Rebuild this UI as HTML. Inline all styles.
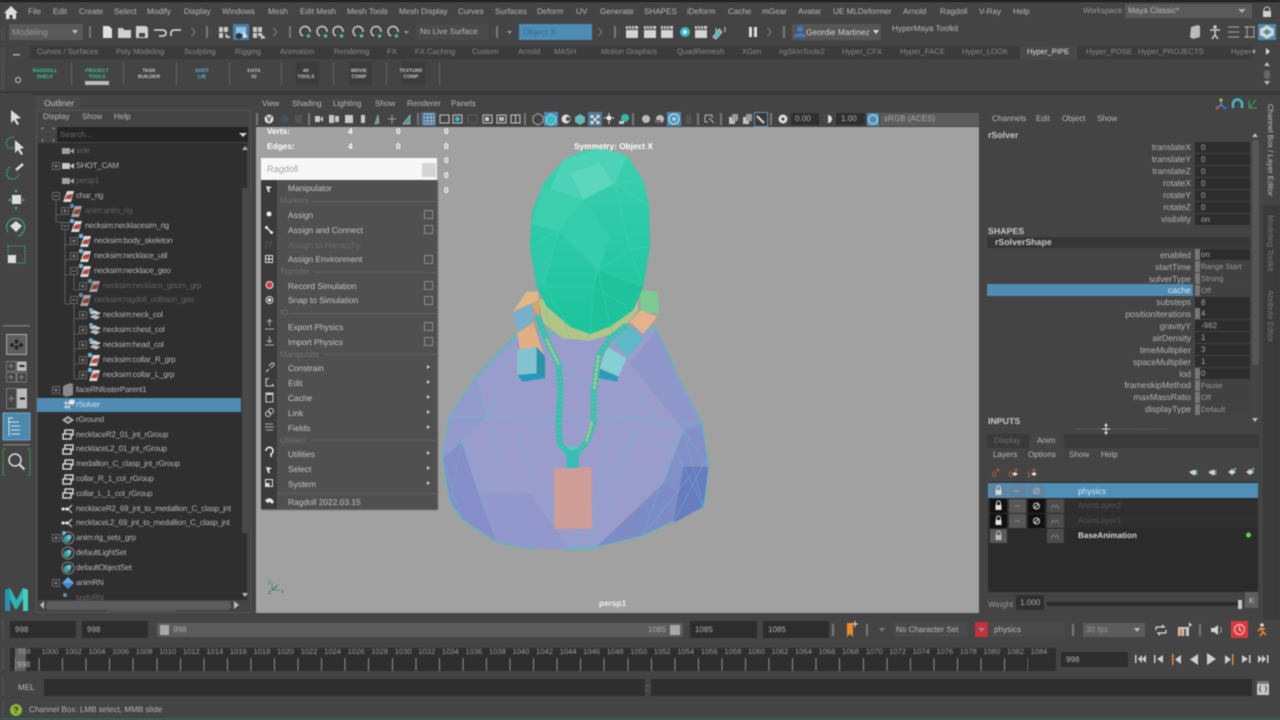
<!DOCTYPE html>
<html><head><meta charset="utf-8"><title>Maya</title>
<style>
html,body{margin:0;padding:0;background:#444;overflow:hidden}
#r{position:relative;width:1280px;height:720px;overflow:hidden;background:#444;font-family:"Liberation Sans",sans-serif;font-size:8.1px;color:#b8b8b8;text-rendering:geometricPrecision;filter:blur(.45px)}
.b{position:absolute}
.t{position:absolute;white-space:nowrap;line-height:12px}
.d{color:#6e6e6e}
.o span{position:absolute;white-space:nowrap;line-height:12px;font-size:8px;letter-spacing:-.22px;color:#b4b4b4}
.o span.d{color:#636363}
.r{position:absolute;right:89px;text-align:right;white-space:nowrap;line-height:12px;font-size:8.7px;color:#b4b4b4}
.v{position:absolute;left:1195px;width:55px;height:11px;background:#2d2d2d;line-height:11px;font-size:8px;color:#a8a8a8;text-indent:6px}
.e{position:absolute;left:1195px;width:55px;height:11px;background:#414141;line-height:11px;font-size:7.6px;color:#999;text-indent:6px}
.e i,.v i{position:absolute;left:0;top:0;width:5px;height:11px;background:#777}
.m{position:absolute;left:288px;white-space:nowrap;line-height:12px;font-size:8.4px;color:#c4c4c4}
.h{position:absolute;left:280px;white-space:nowrap;line-height:12px;font-size:8px;color:#717171}
.k{position:absolute;left:424px;width:7px;height:7px;border:1px solid #8c8c8c}
.a{position:absolute;left:427px;width:0;height:0;border-left:3px solid #d5d5d5;border-top:2.5px solid transparent;border-bottom:2.5px solid transparent}
.l{position:absolute;height:1px;background:#626262;right:843px}
.st{position:absolute;font-size:5px;font-weight:bold;line-height:6px;text-align:center;width:40px;color:#c8c8c8}
.hd{position:absolute;color:#fff;font-weight:bold;font-size:8.3px;line-height:12px;white-space:nowrap}
.w{position:absolute;background:#2d2d2d;height:17px;line-height:17px;font-size:8px;color:#b0b0b0}
#tl{position:absolute;left:18px;top:646px;display:flex;font-size:7.6px;color:#999;line-height:12px}
#tl span{width:23.55px;flex:none}
#sh .t{font-size:7.7px;color:#8a8a8a}
</style></head><body><div id="r">

<!-- chrome backgrounds -->
<div class="b" style="left:0;top:0;width:1280px;height:2px;background:#1b1b1b"></div>
<div class="b" style="left:0;top:91px;width:1280px;height:4px;background:#383838"></div>
<div class="b" style="left:30px;top:46px;width:1222px;height:13px;background:#3b3b3b"></div>
<div class="b" style="left:1020px;top:46px;width:57px;height:14px;background:#484848"></div>

<!-- menu bar -->
<div class="t" style="left:28px;top:6px">File</div><div class="t" style="left:53px;top:6px">Edit</div><div class="t" style="left:79px;top:6px">Create</div><div class="t" style="left:114px;top:6px">Select</div><div class="t" style="left:147px;top:6px">Modify</div><div class="t" style="left:184px;top:6px">Display</div><div class="t" style="left:222px;top:6px">Windows</div><div class="t" style="left:268px;top:6px">Mesh</div><div class="t" style="left:300px;top:6px">Edit Mesh</div><div class="t" style="left:347px;top:6px">Mesh Tools</div><div class="t" style="left:399px;top:6px">Mesh Display</div><div class="t" style="left:458px;top:6px">Curves</div><div class="t" style="left:495px;top:6px">Surfaces</div><div class="t" style="left:537px;top:6px">Deform</div><div class="t" style="left:576px;top:6px">UV</div><div class="t" style="left:600px;top:6px">Generate</div><div class="t" style="left:644px;top:6px">SHAPES</div><div class="t" style="left:687px;top:6px">iDeform</div><div class="t" style="left:728px;top:6px">Cache</div><div class="t" style="left:762px;top:6px">mGear</div><div class="t" style="left:798px;top:6px">Avatar</div><div class="t" style="left:833px;top:6px">UE MLDeformer</div><div class="t" style="left:903px;top:6px">Arnold</div><div class="t" style="left:940px;top:6px">Ragdoll</div><div class="t" style="left:979px;top:6px">V-Ray</div><div class="t" style="left:1013px;top:6px">Help</div>
<div class="b" style="left:1125px;top:4px;width:127px;height:14px;background:#5a5a5a"></div>
<div class="t" style="left:1083px;top:5px;color:#9a9a9a;font-size:7.8px">Workspace:</div>
<div class="t" style="left:1128px;top:5px">Maya Classic*</div>

<!-- toolbar boxes -->
<div class="b" style="left:9px;top:24px;width:74px;height:16px;background:#5a5a5a"></div>
<div class="t" style="left:12px;top:26px;font-size:8.8px;color:#999">Modeling</div>
<div class="b" style="left:233px;top:24px;width:16px;height:16px;background:#4a7fa6"></div>
<div class="b" style="left:416px;top:24px;width:72px;height:16px;background:#4a4a4a"></div>
<div class="t" style="left:420px;top:26px">No Live Surface</div>
<div class="b" style="left:519px;top:24px;width:73px;height:16px;background:#4d8db5"></div>
<div class="t" style="left:523px;top:26px;color:#3f6a88;font-size:8.6px">Object X</div>
<div class="b" style="left:792px;top:24px;width:89px;height:16px;background:#565656"></div>
<div class="t" style="left:806px;top:26px;color:#d0d0d0;font-size:8.3px">Geordie Martinez</div>
<div class="t" style="left:892px;top:23px">HyperMaya Toolkit</div>
<div class="b" style="left:1258px;top:24px;width:18px;height:16px;background:#4d8db5"></div>

<!-- shelf tabs -->
<div id="sh">
<div class="t" style="left:37px;top:46px">Curves / Surfaces</div><div class="t" style="left:116px;top:46px">Poly Modeling</div><div class="t" style="left:184px;top:46px">Sculpting</div><div class="t" style="left:235px;top:46px">Rigging</div><div class="t" style="left:280px;top:46px">Animation</div><div class="t" style="left:334px;top:46px">Rendering</div><div class="t" style="left:387px;top:46px">FX</div><div class="t" style="left:415px;top:46px">FX Caching</div><div class="t" style="left:472px;top:46px">Custom</div><div class="t" style="left:518px;top:46px">Arnold</div><div class="t" style="left:554px;top:46px">MASH</div><div class="t" style="left:601px;top:46px">Motion Graphics</div><div class="t" style="left:677px;top:46px">QuadRemesh</div><div class="t" style="left:742px;top:46px">XGen</div><div class="t" style="left:779px;top:46px">ngSkinTools2</div><div class="t" style="left:842px;top:46px">Hyper_CFX</div><div class="t" style="left:900px;top:46px">Hyper_FACE</div><div class="t" style="left:962px;top:46px">Hyper_LOOK</div><div class="t" style="left:1027px;top:46px;color:#e0e0e0">Hyper_PIPE</div><div class="t" style="left:1086px;top:46px">Hyper_POSE</div><div class="t" style="left:1138px;top:46px">Hyper_PROJECTS</div><div class="t" style="left:1231px;top:46px">Hyper</div>
</div>

<!-- shelf content -->
<div class="st" style="left:25px;top:68px;color:#34c8a0">RAGDOLL<br>SHELF</div>
<div class="st" style="left:77px;top:68px;color:#34c8a0">PROJECT<br>TOOLS</div>
<div class="b" style="left:85px;top:81px;width:24px;height:4px;background:#bcbcbc"></div>
<div class="st" style="left:129px;top:68px">TASK<br>BUILDER</div>
<div class="st" style="left:182px;top:68px;color:#55b8d0">SHOT<br>LIB</div>
<div class="st" style="left:234px;top:68px">DATA<br>IO</div>
<div class="b" style="left:296px;top:62px;width:23px;height:23px;background:#3c3c3c"></div>
<div class="st" style="left:286px;top:68px">4K<br>TOOLS</div>
<div class="b" style="left:349px;top:62px;width:23px;height:23px;background:#3c3c3c"></div>
<div class="st" style="left:339px;top:68px">MOVIE<br>COMP</div>
<div class="b" style="left:402px;top:62px;width:23px;height:23px;background:#3c3c3c"></div>
<div class="st" style="left:391px;top:68px">TEXTURE<br>COMP</div>
<div class="b" style="left:71px;top:62px;width:1px;height:23px;background:#626262;box-shadow:52px 0 #626262,105px 0 #626262,158px 0 #626262,210px 0 #626262,262px 0 #626262,315px 0 #626262,368px 0 #626262"></div>

<!-- outliner -->
<div class="b" style="left:36px;top:96px;width:44px;height:15px;background:#4a4a4a"></div>
<div class="t" style="left:44px;top:97px;font-size:8.6px;color:#c0c0c0">Outliner</div>
<div class="b" style="left:36px;top:110px;width:213px;height:501px;border:1px solid #555;background:#444"></div>
<div class="t" style="left:43px;top:111px">Display</div><div class="t" style="left:82px;top:111px">Show</div><div class="t" style="left:114px;top:111px">Help</div>
<div class="b" style="left:38px;top:143px;width:209px;height:457px;background:#2f2f2f"></div>
<div class="b" style="left:57px;top:127px;width:191px;height:15px;background:#252525"></div>
<div class="t" style="left:60px;top:129px;color:#6a6a6a">Search...</div>
<div class="b" style="left:37px;top:398px;width:204px;height:14px;background:#4f8bb3"></div>
<div class="b" style="left:242px;top:188px;width:7px;height:345px;background:#494949"></div>

<div class="o">
<span class="d" style="left:76px;top:145px">side</span>
<span style="left:76px;top:160px">SHOT_CAM</span>
<span class="d" style="left:76px;top:175px">persp1</span>
<span style="left:76px;top:190px">char_rig</span>
<span class="d" style="left:85px;top:205px">anim:anim_rig</span>
<span style="left:85px;top:220px">necksim:necklacesim_rig</span>
<span style="left:94px;top:235px">necksim:body_skeleton</span>
<span style="left:94px;top:250px">necksim:necklace_util</span>
<span style="left:94px;top:265px">necksim:necklace_geo</span>
<span class="d" style="left:103px;top:280px">necksim:necklace_geom_grp</span>
<span class="d" style="left:94px;top:294px">necksim:ragdoll_collision_geo</span>
<span style="left:103px;top:309px">necksim:neck_col</span>
<span style="left:103px;top:324px">necksim:chest_col</span>
<span style="left:103px;top:339px">necksim:head_col</span>
<span style="left:103px;top:354px">necksim:collar_R_grp</span>
<span style="left:103px;top:369px">necksim:collar_L_grp</span>
<span style="left:76px;top:384px">faceRNfosterParent1</span>
<span style="left:76px;top:399px;color:#d0e0ea">rSolver</span>
<span style="left:76px;top:414px">rGround</span>
<span style="left:76px;top:429px">necklaceR2_01_jnt_rGroup</span>
<span style="left:76px;top:443px">necklaceL2_01_jnt_rGroup</span>
<span style="left:76px;top:458px">medallion_C_clasp_jnt_rGroup</span>
<span style="left:76px;top:473px">collar_R_1_col_rGroup</span>
<span style="left:76px;top:488px">collar_L_1_col_rGroup</span>
<span style="left:76px;top:503px">necklaceR2_69_jnt_to_medallion_C_clasp_jnt</span>
<span style="left:76px;top:517px">necklaceL2_69_jnt_to_medallion_C_clasp_jnt</span>
<span style="left:76px;top:532px">anim:rig_sets_grp</span>
<span style="left:76px;top:547px">defaultLightSet</span>
<span style="left:76px;top:562px">defaultObjectSet</span>
<span style="left:76px;top:577px">animRN</span>
<span class="d" style="left:76px;top:592px;height:8px;overflow:hidden">bodyRN</span>
</div>
<div class="b" style="left:38px;top:600px;width:209px;height:11px;background:#444"></div>
<div class="b" style="left:46px;top:601px;width:185px;height:9px;background:#5c5c5c;border-radius:4px"></div>

<!-- viewport panel -->
<div class="t" style="left:262px;top:98px">View</div><div class="t" style="left:292px;top:98px">Shading</div><div class="t" style="left:333px;top:98px">Lighting</div><div class="t" style="left:375px;top:98px">Show</div><div class="t" style="left:407px;top:98px">Renderer</div><div class="t" style="left:451px;top:98px">Panels</div>
<div class="b" style="left:256px;top:127px;width:723px;height:486px;background:#a1a1a1"></div>
<div class="b" style="left:421px;top:112px;width:15px;height:14px;background:#4a6f8c"></div>
<div class="b" style="left:544px;top:112px;width:14px;height:14px;background:#4d8db5"></div>
<div class="b" style="left:588px;top:112px;width:14px;height:14px;background:#557a99"></div>
<div class="b" style="left:667px;top:112px;width:14px;height:14px;background:#4d8db5"></div>
<div class="b" style="left:754px;top:112px;width:12px;height:13px;border:1px solid #5c8fb0;background:#3a3a3a"></div>
<div class="b" style="left:791px;top:113px;width:28px;height:12px;background:#2f2f2f"></div>
<div class="t" style="left:795px;top:113px;color:#b0b0b0">0.00</div>
<div class="b" style="left:836px;top:113px;width:29px;height:12px;background:#2f2f2f"></div>
<div class="t" style="left:841px;top:113px;color:#b0b0b0">1.00</div>
<div class="b" style="left:867px;top:113px;width:12px;height:13px;background:#4d8db5"></div>
<div class="b" style="left:880px;top:113px;width:99px;height:13px;background:#5c5c5c"></div>
<div class="t" style="left:884px;top:113px;color:#aaa">sRGB (ACES)</div>

<!-- 3D model -->
<svg class="b" style="left:430px;top:130px" width="300" height="430" viewBox="0 0 900 1290">
<defs>
<linearGradient id="hg" x1="0" y1="0" x2="0" y2="1"><stop offset="0" stop-color="#3fd0b0"/><stop offset=".35" stop-color="#30cbaa"/><stop offset="1" stop-color="#1cc49c"/></linearGradient>
</defs>
<!-- body -->
<path d="M260 615 L140 740 L60 860 L38 985 L60 1110 L95 1165 L200 1235 L300 1255 L360 1250 L420 1258 L500 1250 L640 1215 L820 1130 L835 1010 L815 880 L745 745 L680 600 L520 600 Z" fill="#9a9dcb" stroke="#45c3c8" stroke-width="5" stroke-linejoin="round"/>
<g>
<polygon points="140,740 60,860 38,985 95,935 170,860" fill="#929bcc"/>
<polygon points="38,985 60,1110 95,1165 200,1235 145,1090 95,935" fill="#868ec9"/>
<polygon points="200,1235 300,1255 420,1258 300,1090 145,1090" fill="#9297cc"/>
<polygon points="680,600 745,745 815,880 760,900 680,800 600,700" fill="#9097ca"/>
<polygon points="760,900 815,880 835,1010 820,1130 700,1060" fill="#8390c8"/>
<polygon points="700,1060 820,1130 640,1215 500,1250" fill="#7e8cc6"/>
<polygon points="760,1010 835,1010 820,1130 730,1180" fill="#6a7cc0"/>
</g>
<g stroke="#5ac5cd" stroke-width="1.7" fill="none" opacity=".7">
<path d="M170 860 L60 860 M170 860 L660 870 M660 870 L815 880 M95 935 L170 860 L300 1250 M95 935 L260 1200 M95 935 L38 985 M95 935 L200 1235 M170 860 L340 630 M170 860 L140 740 M260 615 L170 860 M340 630 L540 860 L660 870 M660 870 L745 745 M660 870 L600 700 M760 900 L815 880 M760 900 L660 870 M760 900 L700 1060 M760 900 L835 1010 M760 900 L820 1130 M610 915 L500 1250 M610 915 L660 870 M610 915 L730 950 M730 950 L640 1215 M730 950 L820 1130 M730 950 L760 900 M610 915 L420 1258 M265 915 L265 930 L360 870 M265 930 L420 1258 M540 860 L480 1250 M60 1110 L95 935 M38 985 L95 1165 M820 1000 L730 1180 M785 1030 L640 1215"/>
</g>
<!-- neck -->
<path d="M325 510 L340 580 L400 625 L480 632 L570 605 L625 540 L620 490 L480 480 Z" fill="#b3c487"/>
<g stroke="#63c9a8" stroke-width="1.5" fill="none"><path d="M345 540 L370 620 M400 560 L420 628 M470 600 L480 632 M540 590 L550 612"/></g>
<!-- collars left -->
<polygon points="248,545 290,485 325,485 325,510 305,520" fill="#e0b78b"/>
<polygon points="305,520 325,510 330,560 318,548" fill="#d9a269"/>
<polygon points="248,550 305,520 310,575 262,605" fill="#78b0cc"/>
<polygon points="262,610 310,578 340,670 270,660" fill="#e3ae84"/>
<polygon points="262,660 320,650 320,730 262,735" fill="#83c3cf"/>
<polygon points="320,650 345,680 345,745 320,730" fill="#2e91a8"/>
<polygon points="262,735 320,730 345,745 278,755" fill="#2798bb"/>
<!-- collars right -->
<polygon points="630,480 682,485 688,550 632,545" fill="#7dca93"/>
<polygon points="598,575 632,540 682,560 640,612" fill="#e3b48c"/>
<polygon points="550,640 595,590 640,625 595,680" fill="#5fb8c7"/>
<polygon points="510,715 530,650 590,685 565,740" fill="#86cfd3"/>
<polygon points="507,715 565,740 562,755 505,745" fill="#2b9cb8"/>
<!-- beads -->
<g fill="none" stroke-linecap="round" stroke-linejoin="round">
<path d="M325 565 L350 630 L385 700 L392 780 L385 880 L390 940 L410 965" stroke="#45c0b2" stroke-width="19"/>
<path d="M325 565 L350 630 L385 700 L392 780 L385 880 L390 940 L410 965" stroke="#2ba6a8" stroke-width="19" stroke-dasharray="2 12" stroke-linecap="butt" opacity=".6"/>
<path d="M585 590 L540 625 L505 680 L492 780 L490 880 L470 935 L445 965" stroke="#4bc0b0" stroke-width="19"/>
<path d="M585 590 L540 625 L505 680 L492 780 L490 880 L470 935 L445 965" stroke="#2ba6a8" stroke-width="19" stroke-dasharray="2 12" stroke-linecap="butt" opacity=".6"/>
<path d="M350 630 L385 700 M505 680 L492 780 M485 880 L470 930" stroke="#a8c48e" stroke-width="9" stroke-dasharray="3 10"/>
</g>
<rect x="410" y="952" width="36" height="62" fill="#36bdb5"/>
<ellipse cx="428" cy="955" rx="17" ry="5" fill="#55cfc4"/>
<polygon points="372,1016 485,1012 486,1195 372,1197" fill="#cf9d97"/>
<!-- head -->
<path d="M510 55 L590 75 L640 150 L658 230 L660 350 L640 470 L610 540 L540 590 L480 612 L420 590 L350 530 L320 470 L300 350 L305 250 L340 160 L400 90 L460 62 Z" fill="url(#hg)"/>
<polygon points="400,90 510,55 590,75 555,160 460,208 360,175" fill="#4cd2b6"/>
<polygon points="420,130 510,100 550,160 460,208" fill="#5cd7bd"/>
<polygon points="360,175 460,208 385,300 305,280 340,160" fill="#3bcfae"/>
<polygon points="505,420 640,470 610,540 540,590 480,612 490,470" fill="#1fc39b"/>
<polygon points="300,350 385,300 340,470 320,470" fill="#2ec9a8"/>
<polygon points="505,420 385,300 460,208 540,320" fill="#35cdad"/>
<g stroke="#5fdcc4" stroke-width="1.3" fill="none" opacity=".55">
<path d="M510 55 L460 208 L360 175 M510 55 L555 160 L460 208 M590 75 L555 160 L640 150 M555 160 L658 230 M460 208 L385 300 L305 280 M385 300 L300 350 M385 300 L505 420 L640 470 M505 420 L490 470 L480 612 M505 420 L540 590 M385 300 L340 470 L420 590 M340 470 L490 470 M490 470 L610 540 M555 160 L600 360 L505 420 M600 360 L660 350 M600 360 L640 470"/>
</g>
</svg>

<!-- HUD -->
<div class="hd" style="left:267px;top:125px">Verts:</div><div class="hd" style="left:267px;top:140px">Edges:</div>
<div class="hd" style="left:348px;top:125px">4</div><div class="hd" style="left:396px;top:125px">0</div><div class="hd" style="left:444px;top:125px">0</div>
<div class="hd" style="left:348px;top:140px">4</div><div class="hd" style="left:396px;top:140px">0</div><div class="hd" style="left:444px;top:140px">0</div>
<div class="hd" style="left:444px;top:154px">0</div><div class="hd" style="left:444px;top:169px">0</div><div class="hd" style="left:444px;top:184px">0</div>
<div class="hd" style="left:574px;top:140px">Symmetry: Object X</div>
<div class="hd" style="left:599px;top:597px;color:#eee">persp1</div>

<!-- popup menu -->
<div class="b" style="left:261px;top:158px;width:176px;height:22px;background:#f7f7f7"></div>
<div class="t" style="left:267px;top:163px;font-size:9.2px;color:#a4a4a4">Ragdoll</div>
<div class="b" style="left:422px;top:163px;width:14px;height:14px;background:#d4d4d4"></div>
<div class="b" style="left:261px;top:180px;width:176px;height:329px;background:#505050;box-shadow:1px 1px 1px #555"></div>
<div class="b" style="left:261px;top:180px;width:16px;height:329px;background:#3b3b3b"></div>
<div class="m" style="top:182px">Manipulator</div>
<div class="h" style="top:195px">Markers</div><div class="l" style="top:201px;left:312px"></div>
<div class="m" style="top:209px">Assign</div><div class="k" style="top:210px"></div>
<div class="m" style="top:224px">Assign and Connect</div><div class="k" style="top:225px"></div>
<div class="m" style="top:239px;color:#6b6b6b">Assign to Hierarchy</div>
<div class="m" style="top:253px">Assign Environment</div><div class="k" style="top:255px"></div>
<div class="h" style="top:266px">Transfer</div><div class="l" style="top:272px;left:314px"></div>
<div class="m" style="top:280px">Record Simulation</div><div class="k" style="top:281px"></div>
<div class="m" style="top:294px">Snap to Simulation</div><div class="k" style="top:296px"></div>
<div class="h" style="top:307px">IO</div><div class="l" style="top:313px;left:290px"></div>
<div class="m" style="top:321px">Export Physics</div><div class="k" style="top:322px"></div>
<div class="m" style="top:336px">Import Physics</div><div class="k" style="top:337px"></div>
<div class="h" style="top:349px">Manipulate</div><div class="l" style="top:354px;left:324px"></div>
<div class="m" style="top:362px">Constrain</div><div class="a" style="top:365px"></div>
<div class="m" style="top:377px">Edit</div><div class="a" style="top:380px"></div>
<div class="m" style="top:392px">Cache</div><div class="a" style="top:395px"></div>
<div class="m" style="top:407px">Link</div><div class="a" style="top:410px"></div>
<div class="m" style="top:422px">Fields</div><div class="a" style="top:425px"></div>
<div class="h" style="top:435px">Utilities</div><div class="l" style="top:440px;left:310px"></div>
<div class="m" style="top:448px">Utilities</div><div class="a" style="top:451px"></div>
<div class="m" style="top:463px">Select</div><div class="a" style="top:466px"></div>
<div class="m" style="top:478px">System</div><div class="a" style="top:481px"></div>
<div class="l" style="top:493px;left:277px;height:1px"></div>
<div class="m" style="top:496px">Ragdoll 2022.03.15</div>

<!-- channel box -->
<div class="t" style="left:992px;top:113px">Channels</div><div class="t" style="left:1036px;top:113px">Edit</div><div class="t" style="left:1062px;top:113px">Object</div><div class="t" style="left:1097px;top:113px">Show</div>
<div class="t" style="left:988px;top:129px;font-weight:bold;font-size:8.8px;color:#c8c8c8">rSolver</div>
<div class="r" style="top:141px">translateX</div><div class="v" style="top:142px">0</div>
<div class="r" style="top:153px">translateY</div><div class="v" style="top:154px">0</div>
<div class="r" style="top:165px">translateZ</div><div class="v" style="top:166px">0</div>
<div class="r" style="top:177px">rotateX</div><div class="v" style="top:178px">0</div>
<div class="r" style="top:189px">rotateY</div><div class="v" style="top:190px">0</div>
<div class="r" style="top:201px">rotateZ</div><div class="v" style="top:202px">0</div>
<div class="r" style="top:213px">visibility</div><div class="v" style="top:214px">on</div>
<div class="t" style="left:988px;top:225px;font-weight:bold;font-size:8.8px;color:#c8c8c8">SHAPES</div>
<div class="b" style="left:987px;top:237px;width:263px;height:11px;background:#363636"></div>
<div class="t" style="left:995px;top:236px;font-weight:bold;font-size:8.8px;color:#c8c8c8">rSolverShape</div>
<div class="b" style="left:987px;top:284px;width:206px;height:12px;background:#4f8bb3"></div>
<div class="r" style="top:249px">enabled</div><div class="v" style="top:249px"><i></i>on</div>
<div class="r" style="top:261px">startTime</div><div class="e" style="top:261px"><i></i>Range Start</div>
<div class="r" style="top:273px">solverType</div><div class="e" style="top:273px"><i></i>Strong</div>
<div class="r" style="top:284px;color:#dbe7ef">cache</div><div class="e" style="top:285px"><i></i>Off</div>
<div class="r" style="top:296px">substeps</div><div class="v" style="top:297px">8</div>
<div class="r" style="top:308px">positionIterations</div><div class="v" style="top:308px"><i></i>4</div>
<div class="r" style="top:320px">gravityY</div><div class="v" style="top:320px">-982</div>
<div class="r" style="top:332px">airDensity</div><div class="v" style="top:332px">1</div>
<div class="r" style="top:344px">timeMultiplier</div><div class="v" style="top:344px">3</div>
<div class="r" style="top:356px">spaceMultiplier</div><div class="v" style="top:356px">1</div>
<div class="r" style="top:368px">lod</div><div class="v" style="top:368px"><i></i>0</div>
<div class="r" style="top:379px">frameskipMethod</div><div class="e" style="top:380px"><i></i>Pause</div>
<div class="r" style="top:391px">maxMassRatio</div><div class="e" style="top:392px"><i></i>Off</div>
<div class="r" style="top:403px">displayType</div><div class="e" style="top:404px"><i></i>Default</div>
<div class="t" style="left:988px;top:415px;font-weight:bold;font-size:8.8px;color:#c8c8c8">INPUTS</div>
<div class="b" style="left:1252px;top:140px;width:7px;height:225px;background:#565656;border-radius:3px"></div>

<!-- side tabs -->
<div class="b" style="left:1263px;top:205px;width:17px;height:415px;background:#3a3a3a"></div>
<div class="b" style="left:1262px;top:95px;width:14px;height:110px;background:#444"></div>
<div class="t" style="left:1264px;top:104px;writing-mode:vertical-rl;color:#c0c0c0;font-size:7.7px">Channel Box / Layer Editor</div>
<div class="t" style="left:1264px;top:215px;writing-mode:vertical-rl;color:#777;font-size:7.9px">Modeling Toolkit</div>
<div class="t" style="left:1264px;top:290px;writing-mode:vertical-rl;color:#777;font-size:7.9px">Attribute Editor</div>

<!-- layer editor -->
<div class="b" style="left:987px;top:434px;width:272px;height:14px;background:#3a3a3a"></div>
<div class="b" style="left:1029px;top:434px;width:35px;height:14px;background:#454545"></div>
<div class="t" style="left:994px;top:435px;color:#6f6f6f">Display</div><div class="t" style="left:1037px;top:435px">Anim</div>
<div class="t" style="left:993px;top:449px">Layers</div><div class="t" style="left:1028px;top:449px">Options</div><div class="t" style="left:1069px;top:449px">Show</div><div class="t" style="left:1101px;top:449px">Help</div>
<div class="b" style="left:988px;top:482px;width:270px;height:110px;background:#2b2b2b"></div>
<div class="b" style="left:988px;top:483px;width:270px;height:15px;background:#4f8fb8"></div>
<div class="b" style="left:988px;top:499px;width:270px;height:14px;background:#2f2f2f"></div>
<div class="b" style="left:988px;top:514px;width:270px;height:14px;background:#2f2f2f"></div>
<div class="t" style="left:1078px;top:485px;color:#d6e6f0;font-size:8.4px">physics</div>
<div class="t" style="left:1078px;top:500px;color:#555">AnimLayer2</div>
<div class="t" style="left:1078px;top:515px;color:#555">AnimLayer1</div>
<div class="t" style="left:1078px;top:530px;font-weight:bold;color:#d4d4d4">BaseAnimation</div>
<div class="t" style="left:988px;top:599px;color:#9a9a9a">Weight</div>
<div class="b" style="left:1016px;top:595px;width:28px;height:15px;background:#2f2f2f"></div>
<div class="t" style="left:1020px;top:597px;color:#aaa">1.000</div>
<div class="b" style="left:1047px;top:602px;width:193px;height:4px;background:#2a2a2a"></div>
<div class="b" style="left:1238px;top:600px;width:4px;height:9px;background:#c8c8c8"></div>
<div class="b" style="left:1245px;top:592px;width:13px;height:16px;background:#606060"></div>
<div class="t" style="left:1249px;top:595px;color:#ccc;font-size:7.5px">K</div>

<!-- range row -->
<div class="w" style="left:10px;top:621px;width:66px;text-indent:5px">998</div>
<div class="w" style="left:82px;top:621px;width:66px;text-indent:5px">998</div>
<div class="b" style="left:157px;top:623px;width:526px;height:14px;background:#5c5c5c"></div>
<div class="b" style="left:160px;top:625px;width:9px;height:10px;background:#a8a8a8"></div>
<div class="b" style="left:670px;top:625px;width:10px;height:10px;background:#a8a8a8"></div>
<div class="t" style="left:173px;top:624px;color:#aaa">998</div>
<div class="t" style="left:648px;top:624px;color:#aaa">1085</div>
<div class="w" style="left:690px;top:621px;width:67px;text-indent:5px">1085</div>
<div class="w" style="left:763px;top:621px;width:66px;text-indent:5px">1085</div>
<div class="b" style="left:894px;top:622px;width:74px;height:15px;background:#4a4a4a"></div>
<div class="t" style="left:896px;top:624px">No Character Set</div>
<div class="b" style="left:975px;top:622px;width:13px;height:15px;background:#c5303d"></div>
<div class="b" style="left:989px;top:622px;width:76px;height:15px;background:#4a4a4a"></div>
<div class="t" style="left:994px;top:624px">physics</div>
<div class="b" style="left:1083px;top:623px;width:62px;height:14px;background:#5c5c5c"></div>
<div class="t" style="left:1086px;top:624px;color:#999">30 fps</div>
<div class="b" style="left:1231px;top:621px;width:17px;height:17px;background:#d8393f"></div>

<!-- timeline -->
<div class="b" style="left:10px;top:648px;width:1046px;height:23px;background:#2e2e2e"></div>
<div class="b" style="left:15px;top:648px;width:11px;height:23px;background:#626262"></div>
<div class="b" style="left:14.7px;top:658px;width:1013px;height:13px;background:repeating-linear-gradient(90deg,#8c8c8c 0,#8c8c8c 1px,transparent 1px,transparent 23.55px)"></div>
<div id="tl"><span>998</span><span>1000</span><span>1002</span><span>1004</span><span>1006</span><span>1008</span><span>1010</span><span>1012</span><span>1014</span><span>1016</span><span>1018</span><span>1020</span><span>1022</span><span>1024</span><span>1026</span><span>1028</span><span>1030</span><span>1032</span><span>1034</span><span>1036</span><span>1038</span><span>1040</span><span>1042</span><span>1044</span><span>1046</span><span>1048</span><span>1050</span><span>1052</span><span>1054</span><span>1056</span><span>1058</span><span>1060</span><span>1062</span><span>1064</span><span>1066</span><span>1068</span><span>1070</span><span>1072</span><span>1074</span><span>1076</span><span>1078</span><span>1080</span><span>1082</span><span>1084</span></div>
<div class="t" style="left:17px;top:659px;color:#bbb;font-size:8px">998</div>
<div class="b" style="left:1061px;top:652px;width:67px;height:15px;background:#2e2e2e"></div>
<div class="t" style="left:1066px;top:654px;color:#b0b0b0">998</div>

<!-- MEL -->
<div class="t" style="left:18px;top:682px;color:#b8b8b8">MEL</div>
<div class="b" style="left:44px;top:679px;width:601px;height:17px;background:#2e2e2e"></div>
<div class="b" style="left:651px;top:679px;width:601px;height:17px;background:#2e2e2e"></div>
<!-- help -->
<div class="b" style="left:10px;top:704px;width:12px;height:12px;border-radius:6px;background:#8fb53c;text-align:center;line-height:12px;font-size:9px;font-weight:bold;color:#2c3a10">?</div>
<div class="t" style="left:29px;top:704px;color:#b4b4b4">Channel Box: LMB select, MMB slide</div>
<div class="b" style="left:0;top:718px;width:1280px;height:2px;background:#3d5b58"></div>

<!-- Icon overlay -->
<svg class="b" style="left:0;top:0" width="1280" height="720" viewBox="0 0 1280 720">
<defs>
<g id="xf"><polygon points="-5,6 -1,-5 6,-5 3,6" fill="#d8d8d8"/><polygon points="-3,3 -1,-1 5,-2 3,3" fill="#b0463f"/></g>
<g id="xfc"><use href="#xf"/><circle cx="-4" cy="-5" r="2.300" fill="#6fb4dc"/></g>
<g id="cam"><rect x="-6" y="-3" width="8" height="6" fill="#c8c8c8"/><polygon points="2,0 6,-3 6,3" fill="#c8c8c8"/></g>
<g id="msh"><polygon points="-6,-2 -1,-5 6,-2 1,1" fill="#c8c8c8"/><polygon points="-6,2 -1,-1 6,2 1,5" fill="#b8b8b8" stroke="#2f2f2f" stroke-width=".6"/><circle cx="-4" cy="-5" r="2" fill="#6fb4dc"/></g>
<g id="grp"><rect x="-3" y="-5" width="8" height="5" fill="none" stroke="#ddd" stroke-width="1.400"/><rect x="-5" y="-1" width="8" height="5" fill="#2f2f2f" stroke="#ddd" stroke-width="1.400"/></g>
<g id="con"><path d="M-5 0 L0 0 L4 -4 M0 0 L4 4" stroke="#ccc" stroke-width="1.200" fill="none"/><circle cx="-5" cy="0" r="1.600" fill="#ddd"/><circle cx="-1" cy="0" r="1.600" fill="#ddd"/></g>
<g id="set"><circle r="6" fill="none" stroke="#888" stroke-width="1"/><circle cx="-1" cy="1" r="3.600" fill="#3a9c9c"/><circle cx="1" cy="-1" r="2.400" fill="#6fc0c8"/></g>
<g id="ep"><rect x="-3.500" y="-3.500" width="7" height="7" fill="none" stroke="#777" stroke-width=".8"/><path d="M-2 0H2M0 -2V2" stroke="#999" stroke-width=".8"/></g>
<g id="em"><rect x="-3.500" y="-3.500" width="7" height="7" fill="none" stroke="#777" stroke-width=".8"/><path d="M-2 0H2" stroke="#999" stroke-width=".8"/></g>
<g id="sep"><rect x="-1" y="-6" width="2" height="12" fill="#7a7a7a"/></g>
<g id="chev"><path d="M-1.500 -4L2 0L-1.500 4" fill="none" stroke="#7c7c7c" stroke-width="1"/></g>
<g id="mag"><path d="M-2 4 A5 5 0 1 1 5 0" fill="none" stroke="#c4c4c4" stroke-width="1.600"/><circle cx="3.500" cy="4" r="1.800" fill="#3fc3a5"/></g>
<g id="clap"><rect x="-6" y="-2" width="12" height="8" fill="#d4d4d4"/><rect x="-6" y="-6" width="12" height="3" fill="#ccc"/><path d="M-4 -6l1 3M-1 -6l1 3M2 -6l1 3" stroke="#444" stroke-width="1"/></g>
<g id="lk"><rect x="-3" y="-1" width="6" height="5" fill="currentColor"/><path d="M-2 -1V-3A2 2 0 0 1 2 -3V-1" fill="none" stroke="currentColor" stroke-width="1"/></g>
<g id="na"><circle r="3" fill="none" stroke="currentColor" stroke-width="1"/><path d="M-2 2L2 -2" stroke="currentColor" stroke-width="1"/></g>
</defs>

<!-- home -->
<path d="M4 13 L11 6 L18 13 H16 V19 H12.500 V15 H9.500 V19 H6 V13Z" fill="#ddd"/>
<path d="M1.500 28V40M1.500 48V90M4 48V90M4 27V41M3 620V640M3 648V670M3 678V696M3 702V716" stroke="#6e6e6e" stroke-width="1" stroke-dasharray="1 1.500" fill="none"/>
<path d="M0 94H32" stroke="#666" stroke-dasharray="1 1"/>
<!-- toolbar -->
<polygon points="72,30 78,30 75,34" fill="#bcbcbc"/>
<use href="#sep" x="90" y="32"/><use href="#sep" x="207" y="32"/><use href="#sep" x="290" y="32"/><use href="#sep" x="497" y="32"/><use href="#sep" x="615" y="32"/><use href="#sep" x="784" y="32"/>
<use href="#chev" x="193" y="32"/><use href="#chev" x="275" y="32"/><use href="#chev" x="600" y="32"/><use href="#chev" x="769" y="32"/>
<path d="M103 26h6l3 3v9h-9z" fill="#e0e0e0"/>
<path d="M118 28h5l1 2h7v8h-13z" fill="#cfcfcf"/>
<path d="M136 26h10l2 2v10h-12zM139 33h6v4h-6z" fill="#d0d0d0" fill-rule="evenodd"/>
<path d="M154 30h9a3 3 0 0 1 0 6h-4" fill="none" stroke="#ddd" stroke-width="1.600"/><path d="M171 36v-3a3 3 0 0 1 3-3h7" fill="none" stroke="#ddd" stroke-width="1.600"/>
<g fill="#c8c8c8"><rect x="219" y="27" width="4" height="5"/><rect x="224" y="27" width="4" height="5"/><rect x="219" y="33" width="4" height="5"/><polygon points="225,33 231,38 226,38"/></g>
<g fill="#e2e2e2"><rect x="236" y="27" width="10" height="7" fill="#8bc1df"/><circle cx="239" cy="36" r="3" fill="#333"/><polygon points="243,31 248,37 243,38"/></g>
<g fill="#c8c8c8"><rect x="253" y="27" width="4" height="5"/><rect x="258" y="27" width="4" height="5"/><rect x="253" y="33" width="4" height="5"/><rect x="258" y="33" width="4" height="3"/><polygon points="260,33 266,38 261,39"/></g>
<use href="#mag" x="305" y="32"/><use href="#mag" x="322" y="32"/><use href="#mag" x="338" y="32"/><use href="#mag" x="358" y="32"/><use href="#mag" x="376" y="32"/><use href="#mag" x="393" y="32"/>
<polygon points="404,31 409,31 406.500,34" fill="#999"/><polygon points="507,31 512,31 509.500,34" fill="#999"/>
<use href="#clap" x="632" y="32"/><use href="#clap" x="650" y="32"/><use href="#clap" x="667" y="32"/>
<circle cx="685" cy="32" r="5" fill="#3fb6c8"/><circle cx="685" cy="32" r="2" fill="#d6eef4"/>
<use href="#clap" x="701" y="32"/>
<path d="M713 37l6-8 3 3-6 7zM725 27v5M716 28v4" stroke="#ccc" stroke-width="1" fill="#3fb6c8"/>
<rect x="749" y="27" width="3" height="10" fill="#ddd"/><rect x="754" y="27" width="3" height="10" fill="#ddd"/>
<circle cx="800" cy="29" r="3" fill="#3e7fc8"/><path d="M794 37c0-5 12-5 12 0z" fill="#3e7fc8"/>
<polygon points="873,30 879,30 876,34" fill="#ddd"/>
<polygon points="1238,9 1246,9 1242,13" fill="#aaa"/>
<path d="M1264 10a3 3 0 0 1 6 0v2h-6z" fill="none" stroke="#ccc"/><rect x="1263" y="11" width="8" height="6" fill="#d0d0d0"/>
<path d="M1191 27l7-2 2 1v11l-7 2-3-2z" fill="#bcbcbc"/><circle cx="1215" cy="27" r="1.800" fill="#ccc"/><path d="M1210 30h10M1215 30v5l-3 4M1215 35l3 4" stroke="#ccc" stroke-width="1.500" fill="none"/>
<path d="M1228 27h11M1228 32h11M1228 37h11M1244 27h10M1244 37h10M1254 26v12M1247 26v12" stroke="#aaa" fill="none"/>
<path d="M1267 25l7 4v6l-7 4-7-4v-6z" fill="#d2d2d2"/><path d="M1267 29l4 3-4 3-4-3z" fill="#4d8db5"/>
<!-- shelf right -->
<polygon points="1255,49 1255,54 1252,51.500" fill="#aaa"/><polygon points="1266,48 1266,55 1270,51.500" fill="#ddd"/>
<polygon points="1264,66 1270,66 1267,62" fill="#bbb"/><rect x="1264" y="70" width="6" height="9" rx="3" fill="#666"/><polygon points="1264,81 1270,81 1267,85" fill="#bbb"/>
<rect x="13" y="54" width="7" height="1.500" fill="#aaa"/><circle cx="18" cy="80" r="2.500" fill="none" stroke="#ccc"/>
<!-- toolbox -->
<polygon points="11,110 11,123 14,120 17,125 19,124 16,119 21,118" fill="#ddd"/>
<path d="M14 137c-8 0-10 8-5 11 3 1 5 0 5-1" fill="none" stroke="#3aa18f" stroke-width="1.300" stroke-dasharray="2 1"/><polygon points="15,140 15,153 18,150 21,155 23,154 20,149 24,148" fill="#ddd"/>
<path d="M10 167c-5 4-4 12 2 12 3 0 6-1 7-5" fill="none" stroke="#3aa18f" stroke-width="1.300" stroke-dasharray="2 1"/><path d="M16 170l7-6" stroke="#ddd" stroke-width="2.500"/>
<rect x="12" y="195" width="9" height="9" fill="#ddd"/><path d="M16 189l-2 3h4zM16 210l-2 -3h4zM8 200l3-2v4zM25 200l-3-2v4z" fill="#3aa18f"/>
<path d="M8 232a9 9 0 1 1 10 4" fill="none" stroke="#3aa18f" stroke-width="1.200"/><path d="M16 221l6 5-6 6-6-6z" fill="#ddd"/>
<rect x="8" y="246" width="17" height="17" fill="none" stroke="#3aa18f" stroke-dasharray="2 1"/><rect x="8" y="255" width="8" height="8" fill="#ddd"/>
<rect x="3" y="325" width="27" height="1.500" fill="#777"/>
<rect x="6.500" y="334.500" width="20" height="20" fill="#5e5e5e" stroke="#aaa"/><path d="M16.500 339l2.500 2.500-2.500 2.500-2.500-2.500zM16.500 345l2.500 2.500-2.500 2.500-2.500-2.500zM12 342.500l2.500 2.500-2.500 2.500-2.500-2.500zM21 342.500l2.500 2.500-2.500 2.500-2.500-2.500z" fill="#222"/>
<g fill="none" stroke="#777"><rect x="6.500" y="361.500" width="9.500" height="9.500"/><rect x="6.500" y="372.500" width="9.500" height="9.500"/><rect x="17" y="372.500" width="9.500" height="9.500"/><rect x="6.500" y="388.500" width="10" height="20"/></g>
<rect x="17" y="361.500" width="9.500" height="9.500" fill="#bbb"/><rect x="17" y="388.500" width="10" height="20" fill="#bbb"/>
<path d="M8.500 366h5M11 363.500v5M8.500 377h5M11 374.500v5M19 377h5M21.500 374.500v5M8.500 398.500h6M11.500 395.500v6" stroke="#888" fill="none"/>
<path d="M19.500 366h5M20 398.500h5" stroke="#222" stroke-width="2"/>
<rect x="3" y="413" width="27" height="27" fill="#4f88ad" stroke="#6aa5cc"/>
<path d="M8 418h5M8 422h11M11 426h9M11 430h9M11 434h9M9 418v18" stroke="#d2dfe8" fill="none"/>
<rect x="3" y="444" width="27" height="1.500" fill="#777"/>
<path d="M6 449H3V475H6M27 449H30V475H27" fill="none" stroke="#3f8a4f" stroke-width="1"/>
<circle cx="15" cy="460" r="6" fill="none" stroke="#ddd" stroke-width="1.500"/><path d="M19.500 464.500l5 5" stroke="#ddd" stroke-width="2"/>
<path d="M5 611V590L10 588L16.500 600L23 588L28 590V611H23V599L17 609H15L10 599V611Z" fill="#2fb3b0"/><path d="M5 590L10 588L10 611H5Z" fill="#2794b5"/><path d="M23 588L28 590V611H23Z" fill="#46cfc0"/>

<!-- outliner chrome -->
<path d="M42 128h2M42 141h2M52 128h2M52 141h2M42 128v2M54 128v2M42 139v2M54 139v2" stroke="#888" fill="none"/>
<polygon points="239,133 247,133 243,137" fill="#d5d5d5"/>
<polygon points="242,150 248,150 245,146" fill="#aaa"/><polygon points="242,593 248,593 245,597" fill="#bbb"/>
<polygon points="44,601 44,609 40,605" fill="#bbb"/><polygon points="234,601 234,609 239,605" fill="#bbb"/>
<path d="M107 611H177" stroke="#777" stroke-dasharray="1 1.500"/>
<!-- tree lines -->
<path d="M56 200V222H61M56 215H61M65 230V304H70M65 245H70M65 260H70M65 275H70M74 275V290H79M74 304V379H79M74 319H79M74 334H79M74 349H79M74 364H79" stroke="#6a6a6a" fill="none" stroke-width=".8"/>
<!-- expanders -->
<use href="#ep" x="56" y="166"/><use href="#em" x="56" y="196"/><use href="#ep" x="65" y="211"/><use href="#em" x="65" y="226"/><use href="#ep" x="74" y="241"/><use href="#ep" x="74" y="256"/><use href="#em" x="74" y="271"/><use href="#ep" x="83" y="286"/><use href="#em" x="74" y="300"/><use href="#ep" x="83" y="315"/><use href="#ep" x="83" y="330"/><use href="#ep" x="83" y="345"/><use href="#ep" x="83" y="360"/><use href="#ep" x="83" y="375"/><use href="#ep" x="56" y="390"/><use href="#ep" x="56" y="538"/><use href="#ep" x="56" y="583"/>
<!-- tree icons -->
<use href="#cam" x="68" y="151" opacity=".75"/><use href="#cam" x="68" y="166"/><use href="#cam" x="68" y="181" opacity=".75"/>
<use href="#xf" x="68" y="196"/><use href="#xfc" x="76" y="211" opacity=".7"/><use href="#xfc" x="76" y="226"/><use href="#xfc" x="85" y="241"/><use href="#xfc" x="85" y="256"/><use href="#xfc" x="85" y="271"/><use href="#xfc" x="94" y="286" opacity=".7"/><use href="#xfc" x="85" y="300" opacity=".7"/>
<use href="#msh" x="95" y="315"/><use href="#msh" x="95" y="330"/><use href="#msh" x="95" y="345"/><use href="#xfc" x="94" y="360"/><use href="#xfc" x="94" y="375"/>
<path d="M63 386l7-3 3 1v11l-7 2-3-2z" fill="#8a8a8a"/>
<path d="M64 403h7M64 407h6M66 401v8M69 401v8" stroke="#ddd" fill="none"/><circle cx="72" cy="402" r="2.800" fill="#e6e6e6"/>
<path d="M68 416l6 4-6 4-6-4z" fill="#bbb"/><path d="M68 418l3 2-3 2-3-2z" fill="#444"/>
<use href="#grp" x="68" y="435"/><use href="#grp" x="68" y="450"/><use href="#grp" x="68" y="465"/><use href="#grp" x="68" y="480"/><use href="#grp" x="68" y="494"/>
<use href="#con" x="68" y="509"/><use href="#con" x="68" y="523"/>
<use href="#set" x="68" y="538"/><circle cx="64" cy="533" r="2" fill="#6fb4dc"/><use href="#set" x="68" y="553"/><use href="#set" x="68" y="568"/>
<path d="M68 577l6 6-6 6-6-6z" fill="#64a8e0"/><path d="M62 583h12l-6 6z" fill="#4a86c6"/>
<circle cx="65" cy="595" r="2" fill="#5f8fb0"/>

<!-- viewport toolbar -->
<use href="#sep" x="257" y="119"/><circle cx="269" cy="119" r="4.500" fill="#ddd"/><path d="M267 116l2 5 2-5" stroke="#333" fill="none"/>
<circle cx="285" cy="119" r="4" fill="#45505c"/><rect x="295" y="115" width="7" height="8" fill="#5a5050"/>
<use href="#sep" x="309" y="119"/>
<g fill="#c8c8c8"><rect x="315" y="116" width="5" height="6"/><polygon points="320,119 323,116 323,122"/><rect x="329" y="115" width="5" height="8"/><rect x="335" y="116" width="4" height="6"/><rect x="345" y="115" width="8" height="8"/><rect x="361" y="115" width="4" height="8"/></g>
<path d="M375 124l3-9 1 8zM388 119h8M392 115v9M403 124l7-9v9z" fill="#4a9a9a" stroke="#bbb" stroke-width=".7"/>
<use href="#sep" x="418" y="119"/>
<g fill="none" stroke="#c8c8c8"><path d="M424 114h10v10h-10zM424 117.500h10M424 121h10M427.500 114v10M431 114v10" stroke="#b8d4e4" stroke-width=".7"/><rect x="440" y="115" width="9" height="8"/><rect x="453" y="115" width="9" height="8"/><rect x="468" y="115" width="9" height="8" stroke="#5a5a5a"/><rect x="483" y="115" width="9" height="8"/><rect x="497" y="115" width="9" height="8"/><rect x="511" y="115" width="9" height="8"/></g>
<circle cx="457.500" cy="119" r="2.500" fill="#3cb5c8"/><rect x="485" y="117" width="4" height="4" fill="#ccc"/><rect x="499" y="117" width="5" height="4" fill="#bbb"/><path d="M515.500 115v8" stroke="#ccc"/>
<use href="#sep" x="525" y="119"/>
<path d="M538 113.500l5 3v5.500l-5 3-5-3v-5.500z" fill="none" stroke="#aaa"/><path d="M551 114l5 3v5.500l-5 3-5-3v-5.500z" fill="#3fb6c8" stroke="#d0eaf2" stroke-width=".6"/>
<circle cx="566" cy="119" r="4.500" fill="#ddd"/><circle cx="568" cy="119" r="2" fill="#444"/>
<path d="M580 114l5 3v5l-5 3-5-3v-5z" fill="#66b8b8"/>
<path d="M590.500 115h3v3h-3zM596.500 115h3v3h-3zM593.500 118h3v3h-3zM590.500 121h3v3h-3zM596.500 121h3v3h-3z" fill="#ddd"/>
<circle cx="609" cy="118" r="2.500" fill="#eee"/><path d="M609 113v2M609 121v3M604 118h2M612 118h2" stroke="#eee"/>
<circle cx="625" cy="118" r="4" fill="#3cb5a5"/><rect x="619" y="121" width="5" height="3" fill="#ccc"/>
<use href="#sep" x="633" y="119"/>
<circle cx="646" cy="119" r="4" fill="#bbb"/><circle cx="660" cy="119" r="4" fill="#bbb"/><rect x="655" y="120" width="6" height="3" fill="#666"/>
<circle cx="674" cy="119" r="5" fill="none" stroke="#d6eef4"/><circle cx="674" cy="119" r="2" fill="#d6eef4" opacity=".7"/>
<path d="M686 115h5v9h-5z" fill="#555"/><use href="#sep" x="698" y="119"/>
<path d="M705 115h7v3M705 115v7h3M709 118l5 5" stroke="#bbb" fill="none"/><use href="#sep" x="721" y="119"/>
<g fill="#c4c4c4"><rect x="729" y="117" width="6" height="7"/><rect x="732" y="114" width="6" height="7" fill="#9a9a9a"/><rect x="743" y="117" width="6" height="7"/><rect x="746" y="114" width="6" height="7" fill="#9a9a9a"/></g>
<path d="M757 116l7 7" stroke="#ddd" stroke-width="2"/><use href="#sep" x="771" y="119"/>
<circle cx="783" cy="119" r="4.500" fill="#ddd"/><circle cx="783" cy="119" r="1.500" fill="#444"/>
<circle cx="828" cy="119" r="4" fill="#ddd"/><path d="M828 115a4 4 0 0 0 0 8z" fill="#444"/>
<circle cx="873" cy="119.500" r="4.500" fill="none" stroke="#cfe6f0"/>
<!-- axis -->
<path d="M272 590L272 583M272 590L280 590" stroke="#3fa04a"/><path d="M272 590L278 585" stroke="#3a55c8"/>
<text x="281" y="593" font-size="6" fill="#c83030" font-family="Liberation Sans">x</text>
<text x="268" y="583" font-size="6" fill="#2f8a3a" font-family="Liberation Sans">y</text>
<text x="268" y="594" font-size="6" fill="#3050c0" font-family="Liberation Sans">z</text>

<!-- popup icons -->
<polygon points="266,186 272,187 269,189 270,192 268,192" fill="#e4e4e4"/>
<circle cx="269" cy="214" r="2.500" fill="#eee"/>
<path d="M266 227l6 6" stroke="#eee" stroke-width="1.500"/><circle cx="266.500" cy="227.500" r="1.500" fill="#eee"/><circle cx="271.500" cy="232.500" r="1.500" fill="#eee"/>
<path d="M266 241l3 3 3-3M266 241v8M272 241l-3 8" stroke="#555" fill="none"/>
<rect x="265.500" y="255.500" width="7" height="7" fill="none" stroke="#ddd"/><path d="M269 255v7M265 259h7" stroke="#ddd"/>
<circle cx="269.500" cy="285" r="3.500" fill="#d43c44" stroke="#ddd"/><circle cx="269.500" cy="300" r="3.500" fill="none" stroke="#ddd"/><circle cx="269.500" cy="300" r="1.800" fill="#eee"/>
<path d="M269.500 326v-6M267 322l2.500-2.500 2.500 2.500M265 329h9" stroke="#aaa" fill="none"/><path d="M269.500 336v6M267 340l2.500 2.500 2.500-2.500M265 345h9" stroke="#aaa" fill="none"/>
<path d="M266 372l3-3M269 366l3-3a1.500 1.500 0 0 1 2 2l-3 3" stroke="#ccc" fill="none"/>
<path d="M266 378v8h8M266 380l3-2M272 384l2 2" stroke="#ccc" fill="none"/>
<rect x="266" y="393" width="7" height="9" fill="none" stroke="#ccc"/><rect x="266" y="393" width="7" height="2" fill="#ccc"/>
<circle cx="268" cy="414" r="2.500" fill="none" stroke="#ccc"/><circle cx="271" cy="411" r="2.500" fill="none" stroke="#ccc"/>
<path d="M265 424h8M265 427h9M266 430h7" stroke="#aaa" fill="none"/>
<path d="M266 451a3.500 3.500 0 1 1 5 3v3" stroke="#eee" stroke-width="1.600" fill="none"/>
<polygon points="266,467 272,468 269,470 270,473 268,473" fill="#e4e4e4"/>
<rect x="265.500" y="479.500" width="7" height="7" fill="none" stroke="#ddd"/><rect x="265.500" y="483" width="4" height="3.500" fill="#ddd"/>
<path d="M265 500l4-2 3 1 2 3-2 2-2-2-3 1z" fill="#e4e4e4"/>

<!-- channel box chrome -->
<path d="M1221 100v5M1221 105l-4 3M1221 105l4 3" stroke="#3f8ac8" stroke-width="1.500"/><circle cx="1221" cy="100" r="1.600" fill="#d6b040"/><circle cx="1217" cy="108" r="1.600" fill="#d64040"/><circle cx="1225" cy="108" r="1.600" fill="#3a66d0"/>
<path d="M1233 108v-4a4.500 4.500 0 0 1 9 0v4" fill="none" stroke="#44b6c6" stroke-width="2.500"/>
<path d="M1249 108l7-8M1249 100v8h8" stroke="#45a05a" fill="none"/>
<polygon points="1252,137 1258,137 1255,133" fill="#bbb"/><polygon points="1252,418 1258,418 1255,422" fill="#bbb"/>
<!-- divider -->
<path d="M1076 429H1167" stroke="#777" stroke-dasharray="1 1.500"/>
<path d="M1106 425v8M1102 429h8" stroke="#ddd"/><polygon points="1104,426 1108,426 1106,423" fill="#ddd"/><polygon points="1104,432 1108,432 1106,435" fill="#ddd"/>
<text x="992" y="477" font-size="8" fill="#d26a3c" font-family="Liberation Sans">0</text><text x="1008.500" y="477" font-size="8" fill="#d26a3c" font-family="Liberation Sans">0</text><text x="1026.500" y="477" font-size="8" fill="#d26a3c" font-family="Liberation Sans">1</text>
<path d="M996 470h4M998 468v4M1014 470h4M1016 468v4M1032 470h4M1034 468v4" stroke="#d26a3c" stroke-width=".7"/>
<path d="M1012 474l3-2 3 2-3 2zM1031 474l3-2 3 2-3 2z" fill="#ddd"/>
<path d="M1189 472l4-2 3 0v5l-3 0zM1208 472l4-2 3 0v5l-3 0zM1228 472l4-3 4 3-4 3zM1246 472l4-3 4 3-4 3z" fill="#cfcfcf"/>
<path d="M1197 470v5M1216 470v5" stroke="#3fb6c8"/><circle cx="1235" cy="469" r="1.300" fill="#3fb6c8"/><circle cx="1253" cy="469" r="1.300" fill="#3fb6c8"/>
<!-- layers -->
<rect x="990" y="484" width="17" height="14" fill="#5f86a0"/><rect x="1009" y="484" width="17" height="14" fill="#5f86a0"/><rect x="1028" y="484" width="17" height="14" fill="#5f86a0"/>
<g color="#3a4a54"><use href="#lk" x="998.500" y="491" color="#c9d6dd"/><path d="M1014 491h5" stroke="#9fb4c2"/><use href="#na" x="1036.500" y="491" color="#9fb4c2"/></g>
<rect x="990" y="499" width="17" height="14" fill="#111"/><rect x="1009" y="499" width="17" height="14" fill="#585858"/><rect x="1028" y="499" width="17" height="14" fill="#111"/><rect x="1047" y="499" width="17" height="14" fill="#4c4c4c"/>
<rect x="990" y="514" width="17" height="14" fill="#111"/><rect x="1009" y="514" width="17" height="14" fill="#585858"/><rect x="1028" y="514" width="17" height="14" fill="#111"/><rect x="1047" y="514" width="17" height="14" fill="#4c4c4c"/>
<rect x="990" y="529" width="17" height="14" fill="#5a5a5a"/><rect x="1047" y="529" width="17" height="14" fill="#4c4c4c"/>
<use href="#lk" x="998.500" y="506" color="#e0e0e0"/><use href="#lk" x="998.500" y="521" color="#e0e0e0"/><use href="#lk" x="998.500" y="536" color="#bbb"/>
<path d="M1015 506h5M1015 521h5" stroke="#888"/><use href="#na" x="1036.500" y="506" color="#ddd"/><use href="#na" x="1036.500" y="521" color="#ddd"/>
<path d="M1051 509l2-4 2 2 2-2 2 4M1051 524l2-4 2 2 2-2 2 4M1051 539l2-4 2 2 2-2 2 4" stroke="#777" fill="none"/>
<circle cx="1248.500" cy="535" r="2.500" fill="#5fd84a"/>
<!-- range row icons -->
<use href="#sep" x="833" y="630"/><use href="#sep" x="867" y="630"/><use href="#sep" x="1073" y="630"/><use href="#sep" x="1200" y="630"/>
<path d="M847 623h6v14l-3-3-3 3z" fill="#ee8a2e"/><path d="M852 624h6M855 621v6" stroke="#ddd"/>
<polygon points="879,628 885,628 882,632" fill="#777"/>
<polygon points="978,628 985,628 981.500,632" fill="#8a8a8a"/>
<polygon points="1134,628 1140,628 1137,632" fill="#bbb"/>
<path d="M1156 627h8l-2-2M1166 633h-8l2 2M1156 627v3M1166 633v-3" stroke="#ddd" fill="none" stroke-width="1.300"/>
<rect x="1178" y="627" width="11" height="9" fill="#c8c8c8"/><rect x="1180" y="629" width="2" height="7" fill="#d8792e"/><rect x="1184" y="629" width="2" height="7" fill="#555"/><path d="M1189 622v5l3 -2z" fill="#ddd"/>
<path d="M1211 628h3l4-3v10l-4-3h-3z" fill="#d4d4d4"/><path d="M1220 627a4 4 0 0 1 0 6" stroke="#aaa" fill="none"/>
<circle cx="1239.500" cy="629.500" r="5" fill="none" stroke="#ffc8c8"/><path d="M1239.500 626v4l2 1" stroke="#ffe0e0" fill="none"/>
<circle cx="1262" cy="625" r="1.800" fill="#ddd"/><path d="M1261 628l-3 3M1261 628l2 4-3 4M1263 632l3 3M1261 628l4 1" stroke="#e8892e" stroke-width="1.600" fill="none"/>
<!-- transport -->
<g fill="#cfcfcf">
<path d="M1135 655h1.500v8h-1.500zM1142 655v8l-4-4zM1146 655v8l-4-4z"/>
<path d="M1154 655h1.500v8h-1.500zM1163 655v8l-6-4z"/>
<path d="M1181 655v9l-6-4.500z"/>
<path d="M1198 654v11l-8-5.500z"/>
<path d="M1207 653v12l9-6z"/>
<path d="M1225 655v9l6-4.500z"/>
<path d="M1242 655v8l6-4zM1249 655h1.500v8h-1.500z"/>
<path d="M1258 655v8l4-4zM1262 655v8l4-4zM1267 655h1.500v8h-1.500z"/>
</g>
<rect x="1172" y="654" width="1.500" height="11" fill="#e8892e"/><rect x="1232" y="654" width="1.500" height="11" fill="#e8892e"/>
<!-- MEL right -->
<rect x="1257" y="681" width="12" height="14" fill="#c8c8c8"/><rect x="1257" y="681" width="12" height="3" fill="#777"/><path d="M1261 686c-1 0-1 1-1 2s-1 1-1 1 1 0 1 1 0 2 1 2M1265 686c1 0 1 1 1 2s1 1 1 1-1 0-1 1 0 2-1 2" stroke="#333" fill="none" stroke-width=".8"/>
<path d="M646 685v1M646 690v1M648 685v1M648 690v1" stroke="#888"/>
</svg>
</div></body></html>
